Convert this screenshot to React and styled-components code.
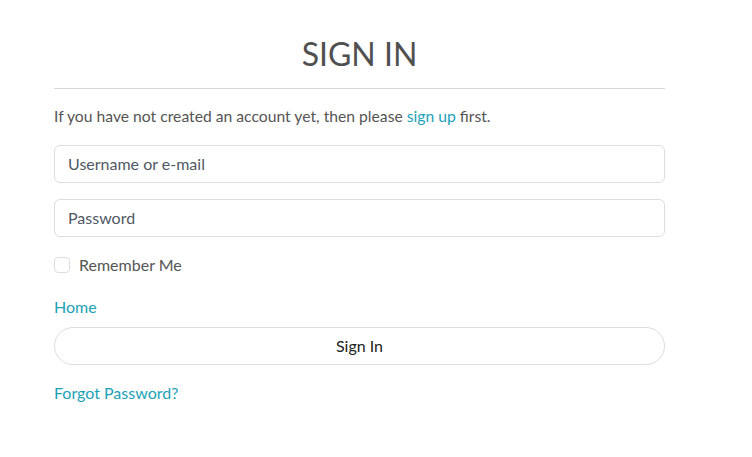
import React from "react";
import styled, { createGlobalStyle } from "styled-components";

const Global = createGlobalStyle`
  html, body { margin: 0; padding: 0; background: #fff; }
  body { font-family: Lato, "Open Sans", sans-serif; color: #555; }
  * { box-sizing: border-box; }
`;

const Page = styled.div`
  width: 611px;
  margin-left: 54px;
  padding-top: 35px;
  display: flex;
  flex-direction: column;
`;

const Title = styled.h1`
  margin: 0;
  font-weight: 400;
  font-size: 32px;
  line-height: 37px;
  text-align: center;
  color: #505050;
  padding-bottom: 16px;
  border-bottom: 1px solid #d6d6d6;
`;

const Note = styled.p`
  margin: 17px 0 0;
  font-size: 15.7px;
  line-height: 20px;
  color: #555;
`;

const Link = styled.a`
  color: #1ba1b8;
  text-decoration: none;
  font-size: ${(p) => p.$size || "16px"};
`;

const Form = styled.form`
  display: flex;
  flex-direction: column;
  margin-top: 19px;
`;

const Input = styled.input`
  height: 38px;
  width: 100%;
  border: 1px solid #dcdde3;
  border-radius: 6px;
  padding: 0 13px 2px;
  font-family: Lato, sans-serif;
  font-size: 16px;
  color: #4a5360;
  margin-bottom: ${(p) => p.$mb || 0}px;
  outline: none;
  &::placeholder { color: #4f5864; }
`;

const CheckRow = styled.label`
  display: flex;
  align-items: center;
  gap: 9px;
  margin-top: 18px;
  font-size: 16px;
  color: #555;
  line-height: 20px;
`;

const Box = styled.span`
  width: 16px;
  height: 16px;
  border: 1px solid #dcdde3;
  border-radius: 4px;
  display: inline-block;
  margin-top: -1px;
`;

const LinkRow = styled.div`
  margin-top: ${(p) => p.$mt}px;
  line-height: 20px;
`;

const Button = styled.button`
  margin-top: 10px;
  height: 38px;
  width: 100%;
  padding: 0 0 2px;
  border: 1px solid #dcdde3;
  border-radius: 19px;
  background: #fff;
  font-family: Lato, sans-serif;
  font-size: 16px;
  color: #222;
`;

export default function App() {
  return (
    <>
      <Global />
      <Page>
        <Title>SIGN IN</Title>
        <Note>
          If you have not created an account yet, then please <Link href="#" $size="inherit">sign up</Link> first.
        </Note>
        <Form onSubmit={(e) => e.preventDefault()}>
          <Input placeholder="Username or e-mail" $mb={16} />
          <Input placeholder="Password" type="text" />
          <CheckRow>
            <Box />
            Remember Me
          </CheckRow>
          <LinkRow $mt={22}>
            <Link href="#">Home</Link>
          </LinkRow>
          <Button type="button">Sign In</Button>
          <LinkRow $mt={18}>
            <Link href="#">Forgot Password?</Link>
          </LinkRow>
        </Form>
      </Page>
    </>
  );
}
